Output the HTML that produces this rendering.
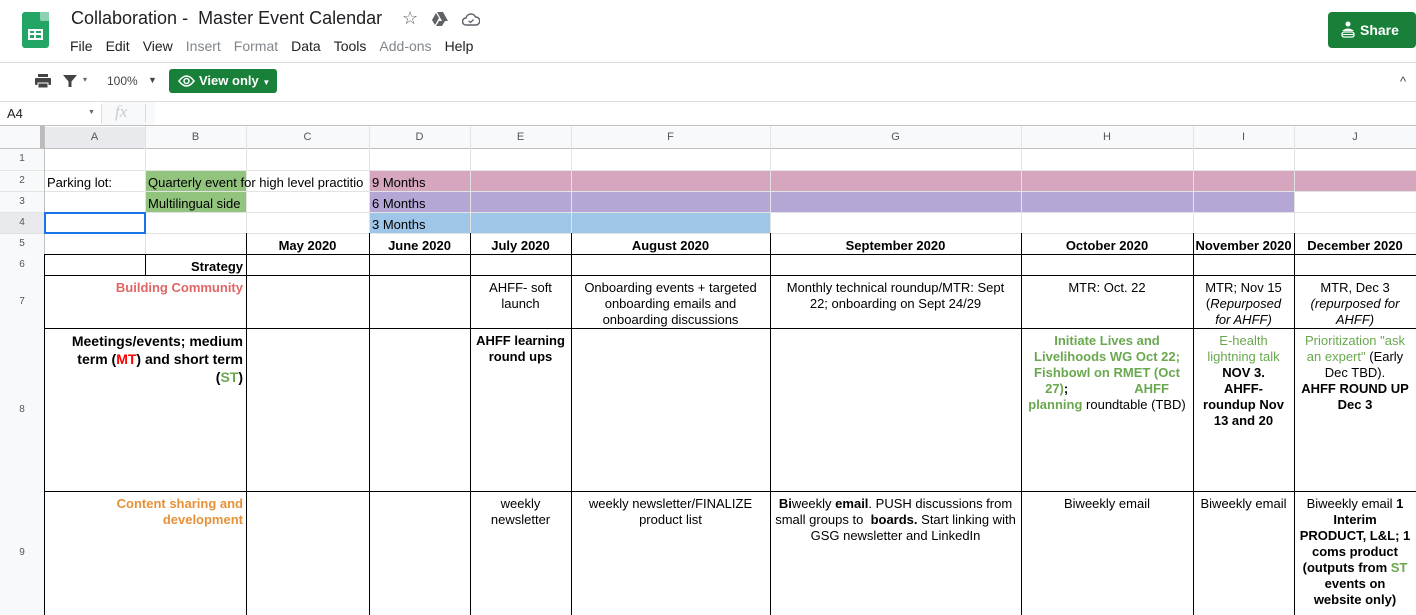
<!DOCTYPE html>
<html><head><meta charset="utf-8"><style>
*{margin:0;padding:0;box-sizing:border-box}
body{width:1416px;height:615px;overflow:hidden;background:#fff;font-family:"Liberation Sans",Arial,sans-serif;position:relative;color:#000}
.a{position:absolute}
.c{position:absolute;font-size:13px;line-height:16px;padding:3px 3px;overflow:hidden;white-space:nowrap}
.ctr{text-align:center}.r{text-align:right}.b{font-weight:bold}
.g{color:#6aa84f}.red{color:#e06666}.or{color:#e69138}
.hl{position:absolute;background:#e2e3e3;height:1px}
.vl{position:absolute;background:#e2e3e3;width:1px}
.menu span{margin-right:13px}
.colh{position:absolute;top:127px;height:21px;font-size:11px;color:#555;text-align:center;line-height:21px;background:#f8f9fa}
.rowh{position:absolute;left:0;width:44px;font-size:10px;color:#555;text-align:center;background:#f8f9fa}
</style></head><body>
<div class="a" style="left:22px;top:12px;width:27px;height:36px;background:#23a566;border-radius:3px"></div>
<div class="a" style="left:40px;top:12px;width:9px;height:9px;background:#8ed1b1;border-bottom-left-radius:2px"></div>
<div class="a" style="left:28px;top:29px;width:15px;height:11px;border:2px solid #fff"></div>
<div class="a" style="left:34px;top:29px;width:2px;height:11px;background:#fff"></div>
<div class="a" style="left:28px;top:33px;width:15px;height:2px;background:#fff"></div>
<div class="a" style="left:71px;top:8px;font-size:18px;color:#202124">Collaboration -&nbsp; Master Event Calendar</div>
<div class="a" style="left:402px;top:8px;font-size:18px;color:#5f6368">☆</div>
<svg class="a" style="left:432px;top:12px" width="16" height="14" viewBox="0 0 16 14"><path d="M5 0h6l5 9h-6z M4 1l3 5-4 7-3-5z M4 14l3-5h6l-3 5z" fill="#5f6368"/></svg>
<svg class="a" style="left:462px;top:13px" width="18" height="13" viewBox="0 0 18 13"><path d="M4 12a3.5 3.5 0 0 1 0-7 5 5 0 0 1 9.5-1A4 4 0 0 1 14 12z" fill="none" stroke="#5f6368" stroke-width="1.5"/><path d="M6.5 8l2 1.5 3-3" fill="none" stroke="#5f6368" stroke-width="1.4"/></svg>
<div class="a menu" style="left:70px;top:38px;font-size:14px;color:#202124"><span>File</span><span>Edit</span><span>View</span><span style="color:#80868b">Insert</span><span style="color:#80868b">Format</span><span>Data</span><span>Tools</span><span style="color:#80868b">Add-ons</span><span>Help</span></div>
<div class="a" style="left:1328px;top:12px;width:88px;height:36px;background:#188038;border-radius:4px;color:#fff;font-size:14px;font-weight:bold;line-height:36px;padding-left:32px">Share</div>
<svg class="a" style="left:1341px;top:21px" width="14" height="18" viewBox="0 0 14 18"><circle cx="7" cy="3" r="2.5" fill="#fff"/><path d="M1 10q6-5 12 0z" fill="#fff"/><rect x="1" y="11" width="12" height="5" rx="2" fill="none" stroke="#fff" stroke-width="1.3"/><path d="M1 13.5h12" stroke="#fff" stroke-width="1"/></svg>
<div class="hl" style="left:0;top:62px;width:1416px;background:#dadce0"></div>
<svg class="a" style="left:35px;top:74px" width="16" height="14" viewBox="0 0 16 14"><rect x="3" y="0" width="10" height="3" fill="#444"/><rect x="0" y="4" width="16" height="7" rx="1" fill="#444"/><rect x="3" y="9" width="10" height="5" fill="#444" stroke="#fff"/></svg>
<svg class="a" style="left:63px;top:75px" width="14" height="12" viewBox="0 0 14 12"><path d="M0 0h14L8.5 6.5V12h-3V6.5z" fill="#444"/></svg>
<div class="a" style="left:83px;top:75px;font-size:8px;color:#666">▾</div>
<div class="a" style="left:107px;top:74px;font-size:12px;color:#444">100%</div>
<div class="a" style="left:148px;top:75px;font-size:9px;color:#444">▼</div>
<div class="a" style="left:169px;top:69px;width:108px;height:24px;background:#188038;border-radius:3px;color:#fff;font-size:13px;font-weight:bold;line-height:24px;padding-left:30px">View only <span style="font-size:8px">▼</span></div>
<svg class="a" style="left:178px;top:75px" width="17" height="12" viewBox="0 0 17 12"><path d="M1 6q7.5-10 15 0q-7.5 10-15 0z" fill="none" stroke="#fff" stroke-width="1.5"/><circle cx="8.5" cy="6" r="2.5" fill="none" stroke="#fff" stroke-width="1.5"/></svg>
<div class="a" style="left:1400px;top:74px;font-size:13px;color:#444">^</div>
<div class="hl" style="left:0;top:101px;width:1416px;background:#dadce0"></div>
<div class="a" style="left:7px;top:106px;font-size:13px;color:#222">A4</div>
<div class="a" style="left:88px;top:109px;font-size:7px;color:#666">▼</div>
<div class="vl" style="left:101px;top:104px;height:20px;background:#dadce0"></div>
<div class="a" style="left:102px;top:102px;width:53px;height:23px;background:#f8f9fa"></div>
<div class="a" style="left:115px;top:102px;font-size:17px;font-style:italic;color:#ccc;font-family:'Liberation Serif',serif">fx</div>
<div class="vl" style="left:145px;top:104px;height:18px;background:#dadce0"></div>
<div class="hl" style="left:0;top:125px;width:1416px;background:#c0c0c0"></div>
<div class="a" style="left:0;top:126px;width:44px;height:22px;background:#f8f9fa"></div>
<div class="a" style="left:40px;top:126px;width:4px;height:22px;background:#bbb"></div>
<div class="colh" style="left:44px;width:101px;background:#e8eaed">A</div>
<div class="colh" style="left:145px;width:101px">B</div>
<div class="colh" style="left:246px;width:123px">C</div>
<div class="colh" style="left:369px;width:101px">D</div>
<div class="colh" style="left:470px;width:101px">E</div>
<div class="colh" style="left:571px;width:199px">F</div>
<div class="colh" style="left:770px;width:251px">G</div>
<div class="colh" style="left:1021px;width:172px">H</div>
<div class="colh" style="left:1193px;width:101px">I</div>
<div class="colh" style="left:1294px;width:122px">J</div>
<div class="rowh" style="top:148px;height:22px;line-height:22px">1</div>
<div class="rowh" style="top:170px;height:21px;line-height:21px">2</div>
<div class="rowh" style="top:191px;height:21px;line-height:21px">3</div>
<div class="rowh" style="top:212px;height:21px;line-height:21px;background:#e8eaed">4</div>
<div class="rowh" style="top:233px;height:21px;line-height:21px">5</div>
<div class="rowh" style="top:254px;height:21px;line-height:21px">6</div>
<div class="rowh" style="top:275px;height:53px;line-height:53px">7</div>
<div class="rowh" style="top:328px;height:163px;line-height:163px">8</div>
<div class="rowh" style="top:491px;height:124px;line-height:124px">9</div>
<div class="a" style="left:145px;top:170px;width:101px;height:42px;background:#93c47d"></div>
<div class="a" style="left:369px;top:170px;width:1047px;height:21px;background:#d5a6bd"></div>
<div class="a" style="left:369px;top:191px;width:925px;height:21px;background:#b4a7d6"></div>
<div class="a" style="left:369px;top:212px;width:402px;height:21px;background:#9fc5e8"></div>
<div class="hl" style="left:0;top:148px;width:1416px;background:#c0c0c0"></div>
<div class="hl" style="left:0;top:170px;width:1416px"></div>
<div class="hl" style="left:0;top:191px;width:1416px"></div>
<div class="hl" style="left:0;top:212px;width:1416px"></div>
<div class="hl" style="left:0;top:233px;width:1416px"></div>
<div class="vl" style="left:44px;top:126px;height:489px;background:#c0c0c0"></div>
<div class="vl" style="left:145px;top:126px;height:128px"></div>
<div class="vl" style="left:246px;top:126px;height:489px"></div>
<div class="vl" style="left:369px;top:126px;height:489px"></div>
<div class="vl" style="left:470px;top:126px;height:489px"></div>
<div class="vl" style="left:571px;top:126px;height:489px"></div>
<div class="vl" style="left:770px;top:126px;height:489px"></div>
<div class="vl" style="left:1021px;top:126px;height:489px"></div>
<div class="vl" style="left:1193px;top:126px;height:489px"></div>
<div class="vl" style="left:1294px;top:126px;height:489px"></div>
<div class="hl" style="left:44px;top:254px;width:1372px;background:#000"></div>
<div class="hl" style="left:44px;top:275px;width:1372px;background:#000"></div>
<div class="hl" style="left:44px;top:328px;width:1372px;background:#000"></div>
<div class="hl" style="left:44px;top:491px;width:1372px;background:#000"></div>
<div class="vl" style="left:145px;top:254px;height:21px;background:#000"></div>
<div class="vl" style="left:246px;top:233px;height:382px;background:#000"></div>
<div class="vl" style="left:369px;top:233px;height:382px;background:#000"></div>
<div class="vl" style="left:470px;top:233px;height:382px;background:#000"></div>
<div class="vl" style="left:571px;top:233px;height:382px;background:#000"></div>
<div class="vl" style="left:770px;top:233px;height:382px;background:#000"></div>
<div class="vl" style="left:1021px;top:233px;height:382px;background:#000"></div>
<div class="vl" style="left:1193px;top:233px;height:382px;background:#000"></div>
<div class="vl" style="left:1294px;top:233px;height:382px;background:#000"></div>
<div class="vl" style="left:44px;top:254px;height:361px;background:#000"></div>
<div class="a" style="left:44px;top:212px;width:102px;height:22px;border:2px solid #1a73e8"></div>
<div class="c" style="left:44px;top:172px;width:101px">Parking lot:</div>
<div class="c" style="left:145px;top:172px;width:224px">Quarterly event for high level practitio</div>
<div class="c" style="left:369px;top:172px;width:200px">9 Months</div>
<div class="c" style="left:145px;top:193px;width:101px">Multilingual side</div>
<div class="c" style="left:369px;top:193px;width:200px">6 Months</div>
<div class="c" style="left:369px;top:214px;width:200px">3 Months</div>
<div class="c b ctr" style="left:246px;top:235px;width:123px">May 2020</div>
<div class="c b ctr" style="left:369px;top:235px;width:101px">June 2020</div>
<div class="c b ctr" style="left:470px;top:235px;width:101px">July 2020</div>
<div class="c b ctr" style="left:571px;top:235px;width:199px">August 2020</div>
<div class="c b ctr" style="left:770px;top:235px;width:251px">September 2020</div>
<div class="c b ctr" style="left:1021px;top:235px;width:172px">October 2020</div>
<div class="c b ctr" style="left:1193px;top:235px;width:101px;padding:3px 0">November 2020</div>
<div class="c b ctr" style="left:1294px;top:235px;width:122px">December 2020</div>
<div class="c b r" style="left:145px;top:256px;width:101px">Strategy</div>
<div class="c b r red" style="left:44px;top:277px;width:202px">Building Community</div>
<div class="c ctr" style="left:470px;top:277px;width:101px">AHFF- soft<br>launch</div>
<div class="c ctr" style="left:571px;top:277px;width:199px">Onboarding events + targeted<br>onboarding emails and<br>onboarding discussions</div>
<div class="c ctr" style="left:770px;top:277px;width:251px">Monthly technical roundup/MTR: Sept<br>22; onboarding on Sept 24/29</div>
<div class="c ctr" style="left:1021px;top:277px;width:172px">MTR: Oct. 22</div>
<div class="c ctr" style="left:1193px;top:277px;width:101px">MTR; Nov 15<br>(<i>Repurposed</i><br><i>for AHFF)</i></div>
<div class="c ctr" style="left:1294px;top:277px;width:122px">MTR, Dec 3<br><i>(repurposed for</i><br><i>AHFF)</i></div>
<div class="c b r" style="left:44px;top:330px;width:202px;font-size:14px;line-height:18px;padding:2px 3px">Meetings/events; medium<br>term (<span style="color:#f00">MT</span>) and short term<br>(<span class="g">ST</span>)</div>
<div class="c b ctr" style="left:470px;top:330px;width:101px">AHFF learning<br>round ups</div>
<div class="c ctr" style="left:1021px;top:330px;width:172px"><b class="g">Initiate Lives and</b><br><b class="g">Livelihoods WG Oct 22;</b><br><b class="g">Fishbowl on RMET (Oct</b><br><b class="g">27)</b><b>;</b><span style="display:inline-block;width:66px"></span><b class="g">AHFF</b><br><b class="g">planning</b> roundtable (TBD)</div>
<div class="c ctr" style="left:1193px;top:330px;width:101px"><span class="g">E-health</span><br><span class="g">lightning talk</span><br><b>NOV 3.</b><br><b>AHFF-</b><br><b>roundup Nov</b><br><b>13 and 20</b></div>
<div class="c ctr" style="left:1294px;top:330px;width:122px"><span class="g">Prioritization "ask</span><br><span class="g">an expert"</span> (Early<br>Dec TBD).<br><b>AHFF ROUND UP</b><br><b>Dec 3</b></div>
<div class="c b r or" style="left:44px;top:493px;width:202px">Content sharing and<br>development</div>
<div class="c ctr" style="left:470px;top:493px;width:101px">weekly<br>newsletter</div>
<div class="c ctr" style="left:571px;top:493px;width:199px">weekly newsletter/FINALIZE<br>product list</div>
<div class="c ctr" style="left:770px;top:493px;width:251px"><b>Bi</b>weekly <b>email</b>. PUSH discussions from<br>small groups to&nbsp; <b>boards.</b> Start linking with<br>GSG newsletter and LinkedIn</div>
<div class="c ctr" style="left:1021px;top:493px;width:172px">Biweekly email</div>
<div class="c ctr" style="left:1193px;top:493px;width:101px;padding:3px 0">Biweekly email</div>
<div class="c ctr" style="left:1294px;top:493px;width:122px">Biweekly email <b>1</b><br><b>Interim</b><br><b>PRODUCT, L&amp;L; 1</b><br><b>coms product</b><br><b>(outputs from <span class="g">ST</span></b><br><b>events on</b><br><b>website only)</b></div>
</body></html>
